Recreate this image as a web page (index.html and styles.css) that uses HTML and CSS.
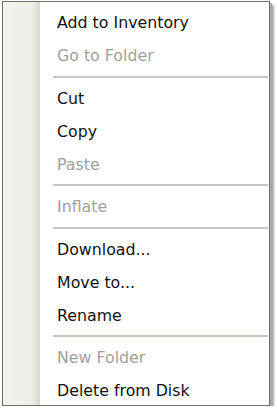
FILE: index.html
```html
<!DOCTYPE html>
<html>
<head>
<meta charset="utf-8">
<link rel="stylesheet" href="styles.css">
</head>
<body>
<div class="menu">
  <ul class="items">
    <li class="item">Add to Inventory</li>
    <li class="item disabled">Go to Folder</li>
    <li class="sep"></li>
    <li class="item">Cut</li>
    <li class="item">Copy</li>
    <li class="item disabled">Paste</li>
    <li class="sep"></li>
    <li class="item disabled">Inflate</li>
    <li class="sep"></li>
    <li class="item">Download...</li>
    <li class="item">Move to...</li>
    <li class="item">Rename</li>
    <li class="sep"></li>
    <li class="item disabled">New Folder</li>
    <li class="item">Delete from Disk</li>
  </ul>
</div>
</body>
</html>
```
FILE: styles.css
```css
html, body {
  margin: 0;
  padding: 0;
  background: #ffffff;
}
body {
  padding: 1px 0 0 2px;
  font-family: "DejaVu Sans", Verdana, sans-serif;
}
.menu {
  width: 266px;
  height: 403px;
  box-sizing: content-box;
  border: 1px solid #6f6f6f;
  background:
    linear-gradient(to right, #f3f2ed 0px, #f0eee8 28px, #e3e0d8 34px, #d9d5cc 37px, #ffffff 37px, #ffffff 100%);
  box-shadow: 2px 2px 0 #a9a9a9, 4px 4px 2px rgba(0, 0, 0, 0.35);
  overflow: hidden;
}
.items {
  list-style: none;
  margin: 0;
  padding: 4px 0 0 37px;
}
.item {
  height: 33px;
  line-height: 33px;
  padding-left: 17px;
  font-size: 15.8px;
  color: #111111;
  white-space: nowrap;
}
.item.disabled {
  color: #a2a09c;
}
.sep {
  height: 9.5px;
  display: flex;
  align-items: center;
  padding: 0 1px 0 13px;
}
.sep::before {
  content: "";
  flex: 1;
  height: 2px;
  background: #c8c6c1;
}
```
